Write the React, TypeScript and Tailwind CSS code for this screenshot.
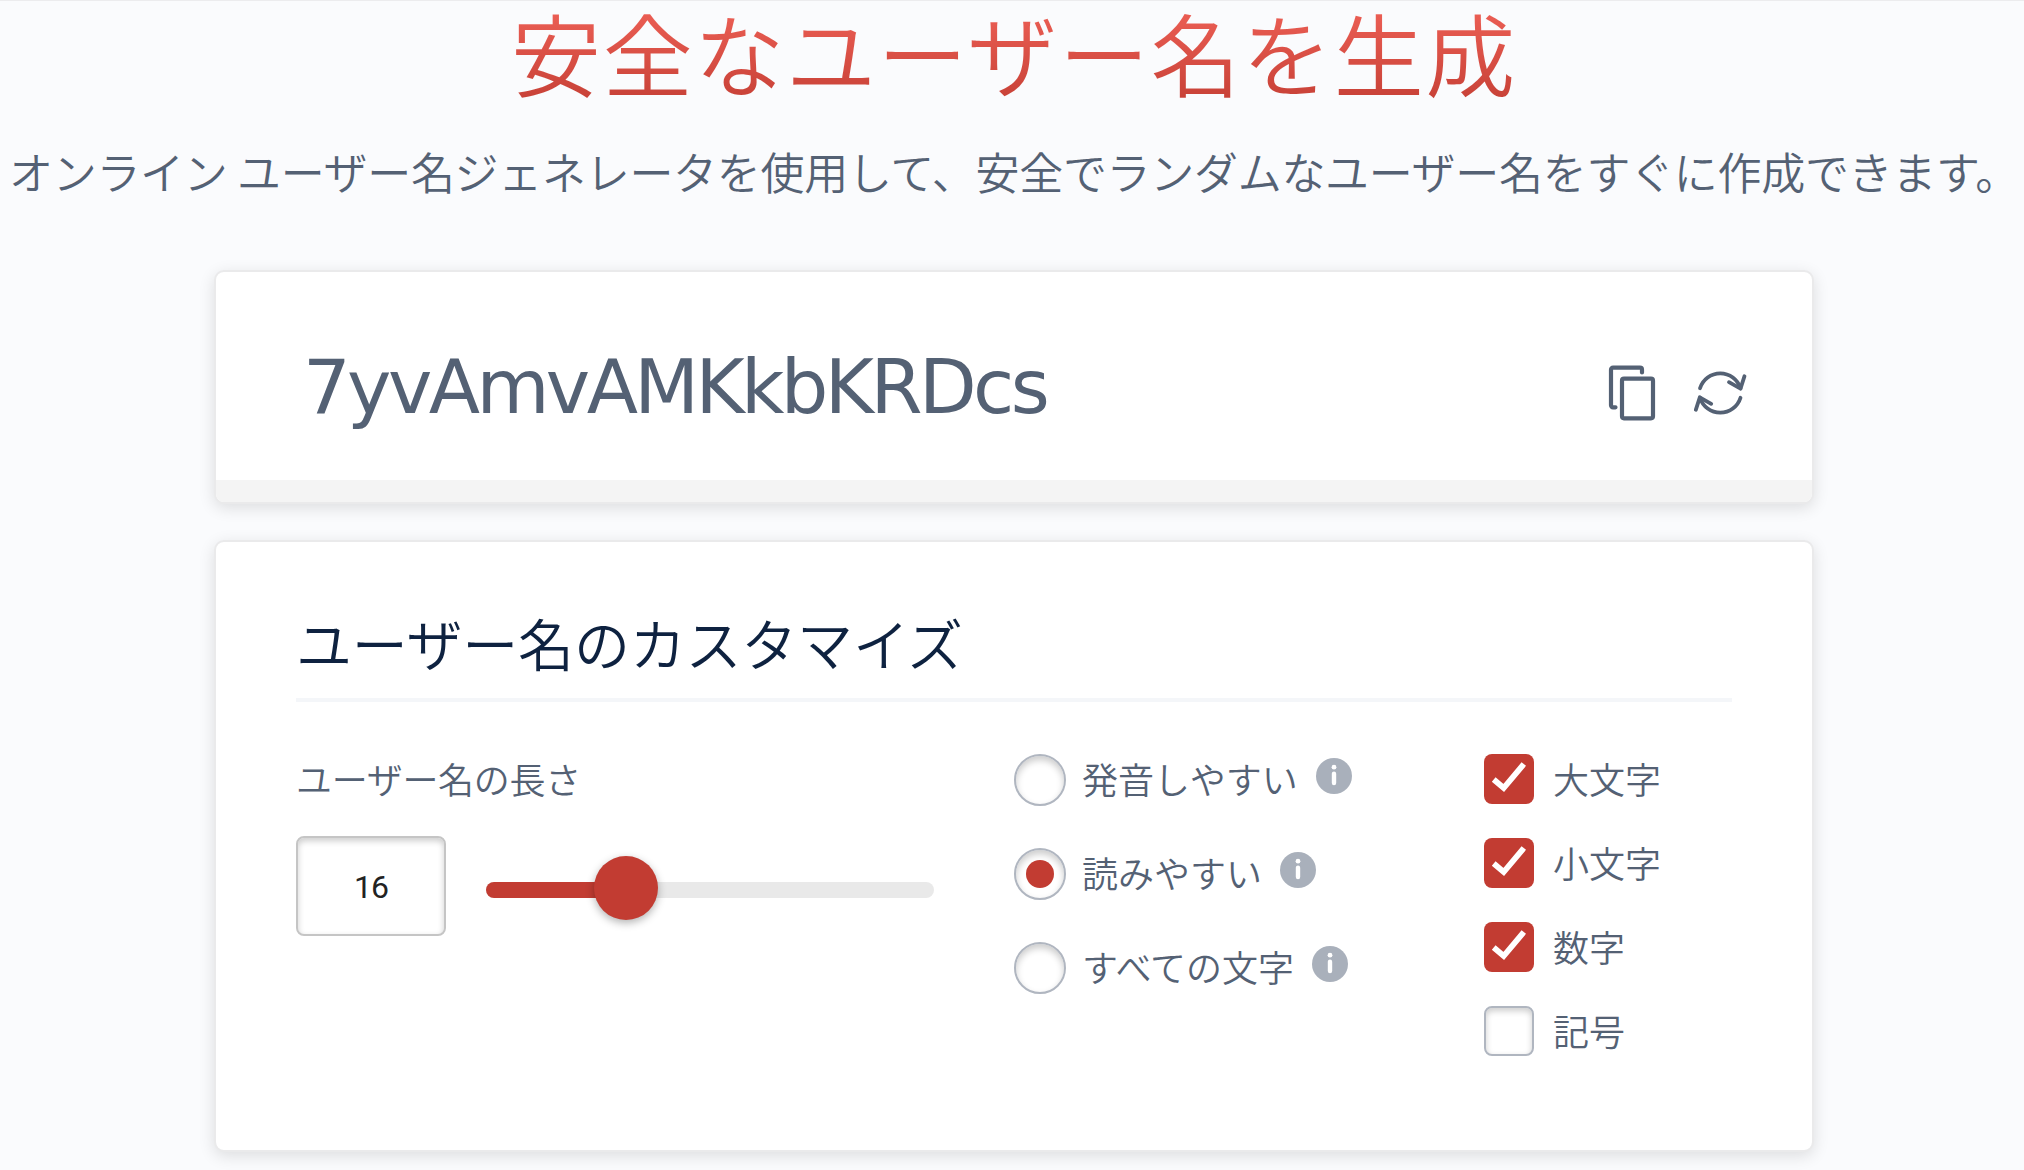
const JP = "font-['Noto_Sans_CJK_JP',sans-serif]";

function CopyIcon() {
  return (
    <svg width="48" height="58" viewBox="0 0 48 58" fill="none" stroke="#546174" strokeWidth="4.2" strokeLinecap="round" strokeLinejoin="round">
      <path d="M7.500 43.300H5a2 2 0 0 1-2-2V5.700a2 2 0 0 1 2-2H32a2 2 0 0 1 2 2V8.500" />
      <rect x="14" y="14.700" width="31" height="39.600" rx="2" />
    </svg>
  );
}

function RefreshIcon() {
  return (
    <svg width="54" height="50" viewBox="0 0 54 50" fill="none" stroke="#546174" strokeWidth="3.8" strokeLinecap="round" strokeLinejoin="round">
      <path d="M7 20.200A21.200 21.200 0 0 1 47.500 20.200" />
      <path d="M51.500 8.200L47.500 20.700L36 14.200" />
      <path d="M47.500 29.800A21.200 21.200 0 0 1 7 29.800" />
      <path d="M2.800 41.800L6.800 29.300L18.200 35.800" />
    </svg>
  );
}

function InfoIcon() {
  return (
    <svg width="36" height="36" viewBox="0 0 36 36" className="mb-2 shrink-0">
      <circle cx="18" cy="18" r="18" fill="#a9b0bb" />
      <circle cx="18" cy="9.200" r="2.400" fill="#fff" />
      <rect x="15.800" y="13.600" width="4.400" height="13.600" rx="2.200" fill="#fff" />
    </svg>
  );
}

const radios = [
  { label: "発音しやすい", checked: false, width: "w-[216px]" },
  { label: "読みやすい", checked: true, width: "w-[180px]" },
  { label: "すべての文字", checked: false, width: "w-[212px]" },
];

const checks = [
  { label: "大文字", checked: true },
  { label: "小文字", checked: true },
  { label: "数字", checked: true },
  { label: "記号", checked: false },
];

const card = "w-[1600px] rounded-[10px] border-2 border-[#eaeaeb] bg-white bg-clip-padding shadow-[0_4px_16px_rgba(0,0,0,0.12)]";

export default function App() {
  return (
    <div className={`flex h-[1170px] w-[2024px] flex-col items-center overflow-hidden border-t border-[#ececee] bg-[#fafbfd] pl-[4px] text-[#546174] ${JP}`}>
      <h1 className="h-[132px] bg-linear-to-b from-[#ea5d53] from-10% to-[#c53f35] to-80% bg-clip-text text-[90px] leading-[100px] font-[350] tracking-[1.6px] whitespace-nowrap text-transparent">
        安全なユーザー名を生成
      </h1>
      <p className="mt-[6px] h-[64px] text-[44px] leading-[64px] font-[350] tracking-[-0.3px] whitespace-nowrap">
        オンライン ユーザー名ジェネレータを使用して、安全でランダムなユーザー名をすぐに作成できます。
      </p>

      <section className={`mt-[67px] flex h-[234px] flex-col overflow-hidden ${card}`}>
        <div className="flex h-[208px] shrink-0 items-center pr-[65px] pl-[87px]">
          <span className="mt-[22px] grow font-['DejaVu_Sans',sans-serif] text-[75px] leading-[90px] tracking-[-3.6px] [font-kerning:none]">
            7yvAmvAMKkbKRDcs
          </span>
          <div className="mt-[34px] flex items-center gap-[37px]">
            <CopyIcon />
            <RefreshIcon />
          </div>
        </div>
        <div className="h-[22px] shrink-0 bg-[#f4f4f4]" />
      </section>

      <section className={`mt-[36px] h-[612px] px-[80px] ${card}`}>
        <h2 className="mt-[60px] h-[100px] w-[1436px] border-b-4 border-[#f4f6f9] text-[56px] leading-[80px] font-[350] tracking-[-0.2px] text-[#0e2240]">
          ユーザー名のカスタマイズ
        </h2>
        <div className="flex pt-[52px]">
          <div className="w-[718px]">
            <div className="h-[52px] text-[36px] leading-[49px] font-[350] tracking-[-0.3px]">ユーザー名の長さ</div>
            <div className="mt-[30px] flex items-center">
              <div className="flex h-[100px] w-[150px] items-center justify-center rounded-[8px] border-2 border-[#c5c5c5] font-['Roboto',sans-serif] text-[32px] text-[#222] shadow-[inset_0_3px_6px_rgba(0,0,0,0.2)]">
                <span className="mt-[2px] tracking-[-1px]">16</span>
              </div>
              <div className="relative mt-[8px] ml-[40px] h-[16px] w-[448px] rounded-full bg-[#e9e9e9]">
                <div className="h-full w-[140px] rounded-full bg-[#c23c32]" />
                <div className="absolute top-[-26px] left-[108px] size-[64px] rounded-full bg-[#c23c32] shadow-[0_3px_8px_rgba(0,0,0,0.3)]" />
              </div>
            </div>
          </div>
          <div className="flex w-[470px] flex-col gap-[42px]">
            {radios.map((r) => (
              <div key={r.label} className="flex h-[52px] items-center">
                <span className="flex size-[52px] shrink-0 items-center justify-center rounded-full border-2 border-[#b0b6c0] shadow-[inset_0_4px_7px_rgba(0,0,0,0.2)]">
                  {r.checked && <span className="size-[28px] rounded-full bg-[#c23c32]" />}
                </span>
                <span className={`mr-[18px] mb-[4px] ml-[16px] text-[36px] leading-[52px] font-[350] whitespace-nowrap ${r.width}`}>{r.label}</span>
                <InfoIcon />
              </div>
            ))}
          </div>
          <div className="flex flex-col gap-[34px]">
            {checks.map((c) => (
              <div key={c.label} className="flex h-[50px] items-center">
                {c.checked ? (
                  <span className="size-[50px] rounded-[8px] bg-[#c23c32]">
                    <svg width="50" height="50" viewBox="0 0 50 50" fill="none" stroke="#fff" strokeWidth="5.800">
                      <path d="M9.700 25.500L19.700 34L39.800 10" />
                    </svg>
                  </span>
                ) : (
                  <span className="size-[50px] rounded-[8px] border-2 border-[#b0b6c0] shadow-[inset_0_3px_6px_rgba(0,0,0,0.2)]" />
                )}
                <span className="mb-[2px] ml-[19px] text-[36px] leading-[52px] font-[350]">{c.label}</span>
              </div>
            ))}
          </div>
        </div>
      </section>
    </div>
  );
}
